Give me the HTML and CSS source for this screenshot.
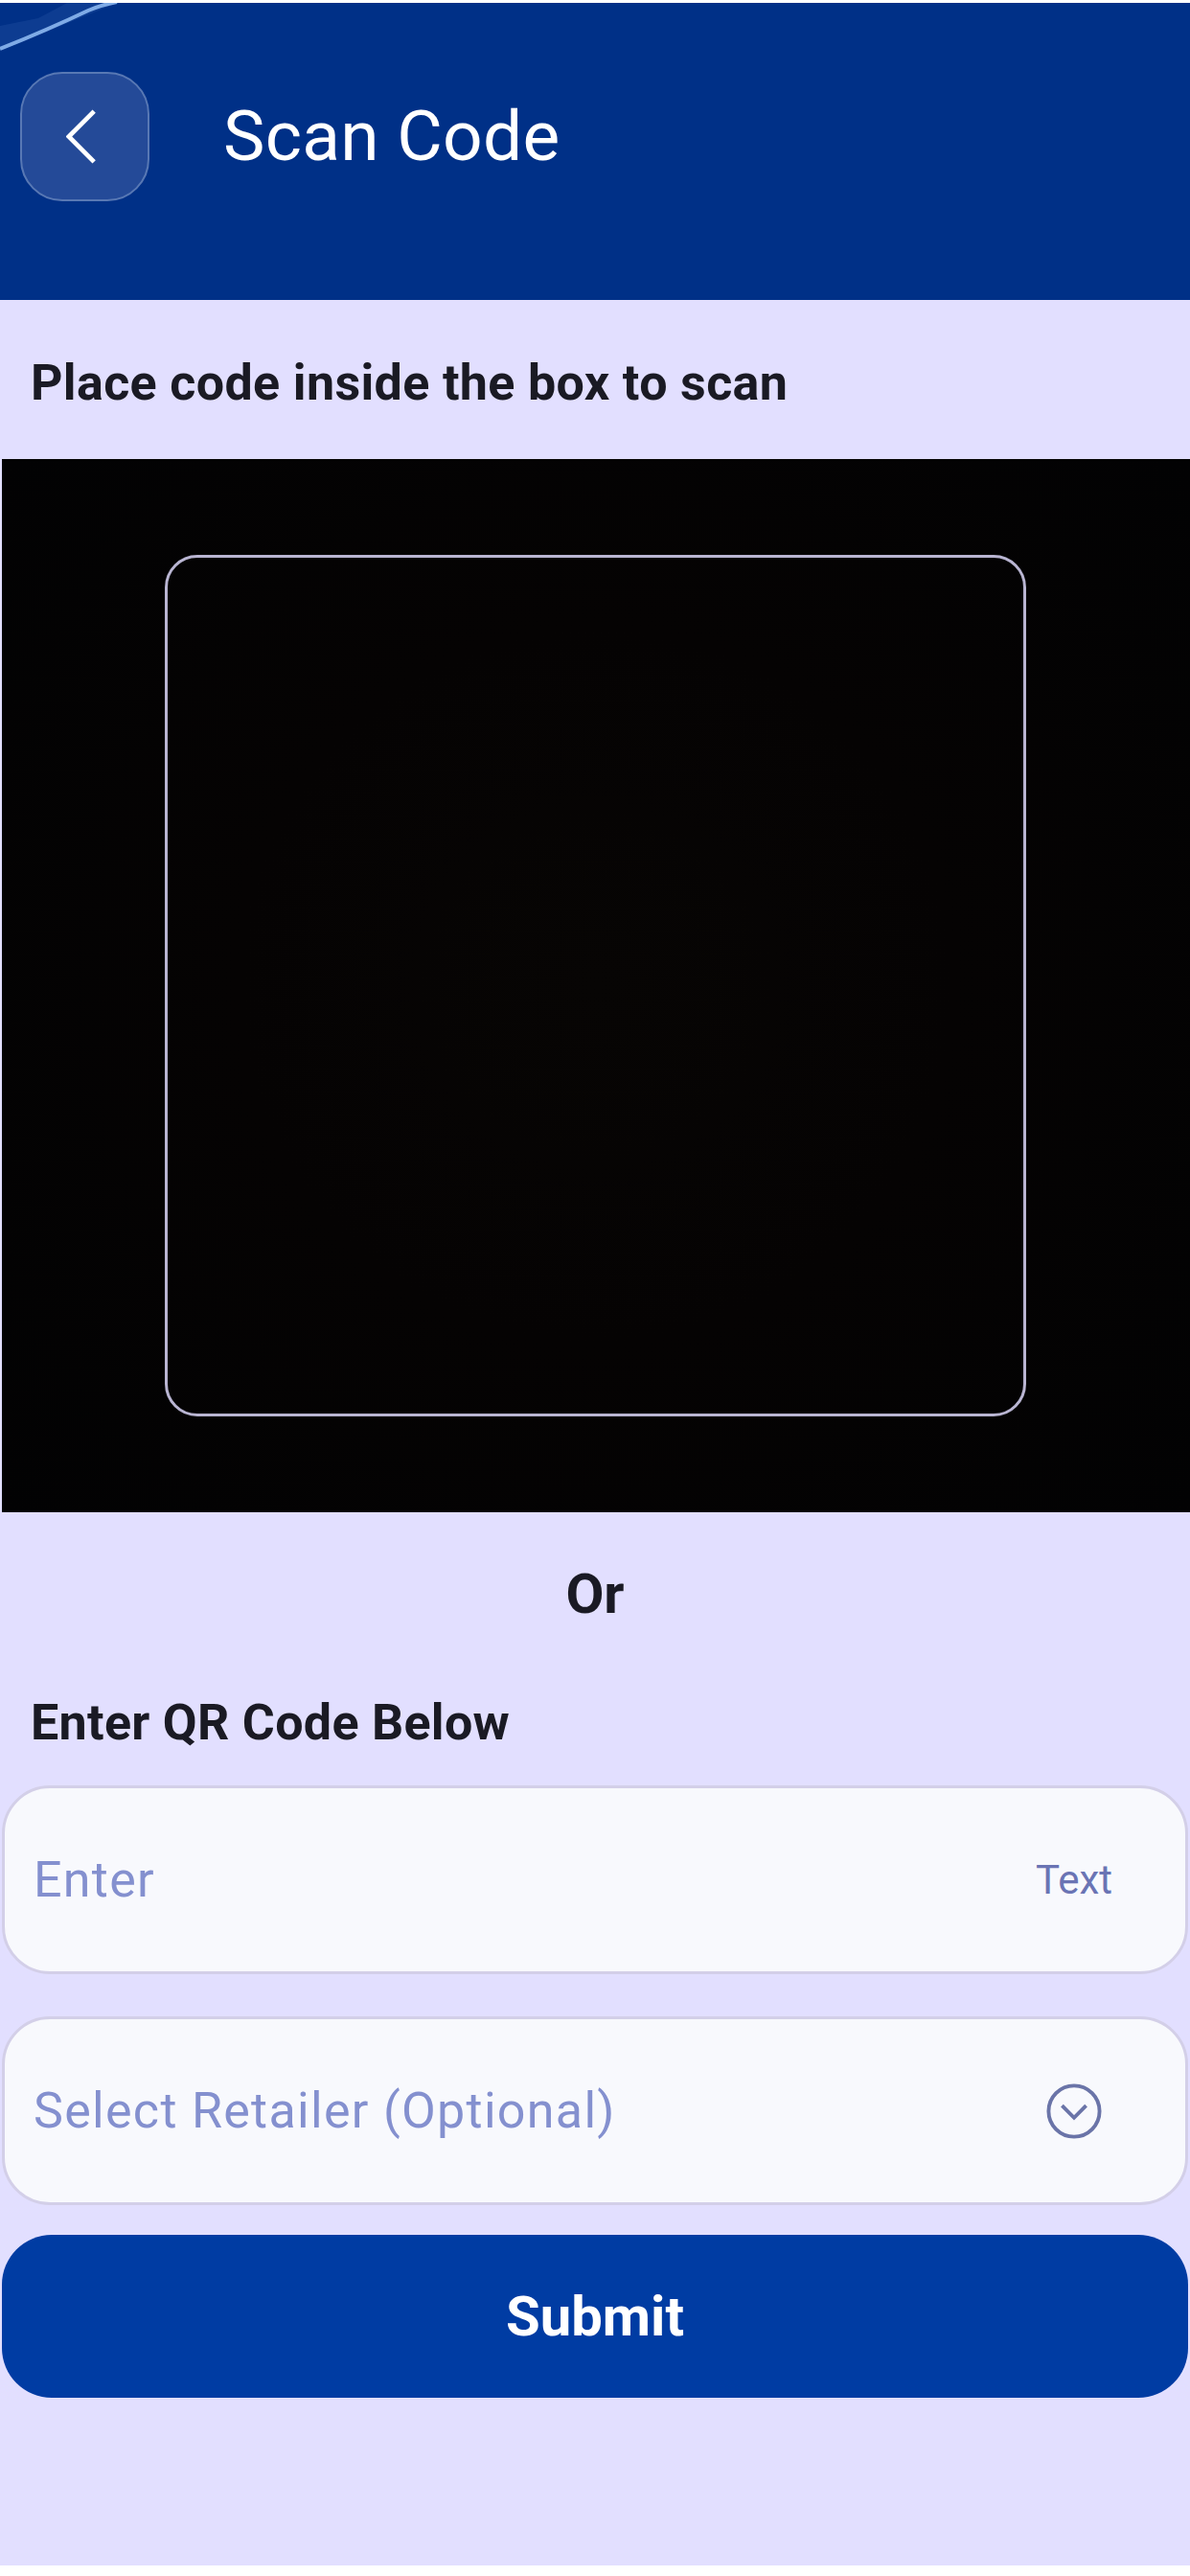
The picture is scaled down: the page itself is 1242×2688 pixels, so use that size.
FILE: index.html
```html
<!DOCTYPE html>
<html lang="en">
<head>
<meta charset="utf-8">
<title>Scan Code</title>
<link rel="stylesheet" href="styles.css">
</head>
<body>
<main class="screen">
  <header class="topbar">
    <svg class="topbar-glow" viewBox="0 0 140 60" aria-hidden="true">
      <path class="glow-fan" d="M0 24 L40 16 L70 0 L122 0 L0 50Z"/>
      <path class="glow-line" d="M0 48 Q50 28 92 8 Q106 2 122 -1"/>
    </svg>
    <button class="back-button" type="button" aria-label="Back">
      <svg viewBox="0 0 34 60" class="back-icon"><path d="M31 2 L3 30 L31 58"/></svg>
    </button>
    <h1 class="topbar-title">Scan Code</h1>
  </header>

  <p class="hint">Place code inside the box to scan</p>

  <section class="camera">
    <div class="scan-frame"></div>
  </section>

  <p class="divider-label">Or</p>
  <h2 class="form-label">Enter QR Code Below</h2>

  <form class="form">
    <div class="field">
      <span class="field-placeholder">Enter</span>
      <span class="field-tag">Text</span>
    </div>
    <div class="field field-select">
      <span class="field-placeholder">Select Retailer (Optional)</span>
      <svg class="field-chevron" viewBox="0 0 60 60" aria-hidden="true">
        <circle cx="30" cy="30" r="27.5"/>
        <path d="M17 24 L30 37 L43 24"/>
      </svg>
    </div>
    <button class="submit" type="button">Submit</button>
  </form>
</main>
</body>
</html>
```

FILE: styles.css
```css
* { box-sizing: border-box; }

html, body {
  margin: 0;
  background: #fff;
}

.screen {
  width: 1242px;
  height: 2674px;
  margin-top: 3px;
  background: #e2dfff;
  font-family: Roboto, "Liberation Sans", sans-serif;
  color: #1a1a24;
  overflow: hidden;
}

.topbar {
  position: relative;
  height: 310px;
  padding: 72px 0 0 21px;
  background: #003087;
  display: flex;
  align-items: flex-start;
  gap: 77px;
  overflow: hidden;
}

.topbar-glow {
  position: absolute;
  left: 0;
  top: 0;
  width: 140px;
  height: 60px;
}

.glow-fan { fill: #4f7fc4; opacity: .16; }
.glow-line { fill: none; stroke: #7fabe6; stroke-width: 4; }

.back-button {
  width: 135px;
  height: 135px;
  padding: 0 7px 0 0;
  flex: none;
  display: flex;
  align-items: center;
  justify-content: center;
  background: #244a98;
  border: 2px solid #5878b4;
  border-radius: 44px;
}

.back-icon {
  width: 32px;
  height: 57px;
  fill: none;
  stroke: #fff;
  stroke-width: 5;
}

.topbar-title {
  margin: 0;
  height: 135px;
  font-size: 73px;
  line-height: 135px;
  font-weight: 400;
  letter-spacing: .3px;
  color: #fff;
}

.hint {
  margin: 0;
  height: 166px;
  padding: 58px 0 0 32px;
  font-size: 52px;
  line-height: 58px;
  font-weight: 700;
  letter-spacing: .35px;
}

.camera {
  height: 1099px;
  margin-left: 2px;
  padding-top: 100px;
  background: radial-gradient(circle at 50% 50%, #070504 0%, #050303 45%, #020203 100%);
  display: flex;
  justify-content: center;
  align-items: flex-start;
}

.scan-frame {
  width: 899px;
  height: 899px;
  margin-left: -2px;
  border: 3px solid #b9b5d2;
  border-radius: 34px;
}

.divider-label {
  margin: 56px 0 0;
  height: 58px;
  font-size: 58px;
  line-height: 58px;
  font-weight: 700;
  text-align: center;
}

.form-label {
  margin: 77px 0 0 32px;
  height: 58px;
  font-size: 52px;
  line-height: 58px;
  font-weight: 700;
  letter-spacing: .3px;
}

.form {
  margin-top: 36px;
  padding: 0 2px;
  display: flex;
  flex-direction: column;
}

.field {
  height: 197px;
  padding: 0 76px 0 30px;
  margin-bottom: 44px;
  display: flex;
  align-items: center;
  justify-content: space-between;
  background: #f8f9fd;
  border: 3px solid #d3cfe8;
  border-radius: 50px;
}

.field-select {
  padding-right: 87px;
  margin-bottom: 31px;
}

.field-placeholder {
  font-size: 52px;
  color: #8490cf;
  letter-spacing: 1.3px;
}

.field-tag {
  font-size: 42px;
  color: #6a74b4;
}

.field-chevron {
  width: 58px;
  height: 58px;
  fill: none;
  stroke: #6a74a8;
  stroke-width: 4;
}

.submit {
  height: 170px;
  border: 0;
  border-radius: 52px;
  background: #003ca3;
  color: #fff;
  font-family: inherit;
  font-size: 58px;
  font-weight: 700;
}
```
